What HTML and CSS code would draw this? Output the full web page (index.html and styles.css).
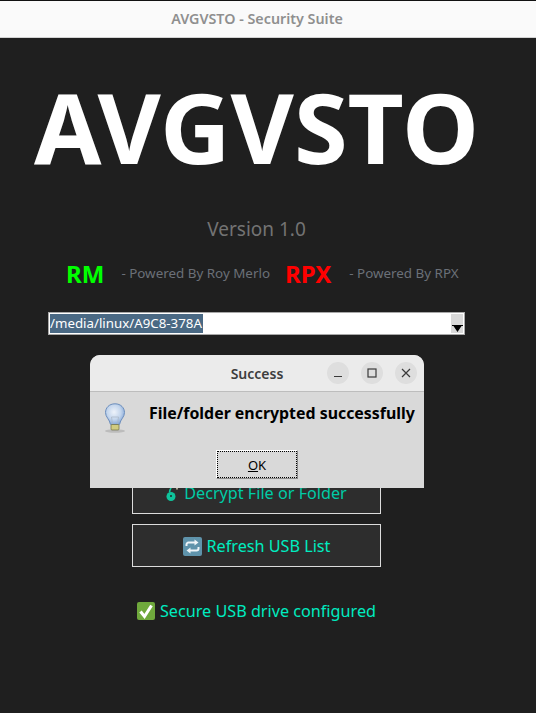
FILE: index.html
```html
<!DOCTYPE html>
<html lang="en">
  <head>
    <meta charset="UTF-8" />
    <meta name="viewport" content="width=device-width, initial-scale=1.0" />
    <title>AVGVSTO - Security Suite</title>
    <link rel="stylesheet" href="styles.css">
  </head>
  <body>
    <div class="window">
      <header class="titlebar">AVGVSTO - Security Suite</header>
      <main class="content">
        <h1 class="logo">AVGVSTO</h1>
        <p class="version">Version 1.0</p>
        <div class="credits">
          <span class="mark green">RM</span>
          <span class="powered">- Powered By Roy Merlo</span>
          <span class="mark red">RPX</span>
          <span class="powered">- Powered By RPX</span>
        </div>
        <div class="combo">
          <div class="combo-field"><span class="combo-value">/media/linux/A9C8-378A</span></div>
          <div class="combo-arrow">
            <svg width="11" height="7" viewBox="0 0 11 7"><path d="M0 0h11v1H9.500L5.500 7l-4-6H0z" fill="#000"/></svg>
          </div>
        </div>
        <div class="actions">
          <button class="action dim">
            <svg class="icon" width="13" height="18" viewBox="0 0 13 18">
              <circle cx="5" cy="12.500" r="4.500" fill="#0fc49c"/>
              <circle cx="5" cy="12" r="1" fill="#1f2a28"/>
              <path d="M3.500 8.500C4 5 5 2.500 7.500 2.500" fill="none" stroke="#0fc49c" stroke-width="1.600"/>
              <path d="M11 1.500v4" stroke="#d9d2b4" stroke-width="1.500"/>
            </svg>
            Decrypt File or Folder
          </button>
          <button class="action">
            <svg class="icon" width="19" height="19" viewBox="0 0 19 19">
              <rect width="19" height="19" rx="2" fill="#5f93ab"/>
              <path d="M3.500 9V7.500a2 2 0 0 1 2-2h7" fill="none" stroke="#eef4f8" stroke-width="2"/>
              <path d="M11.500 2.500l4 3-4 3z" fill="#eef4f8"/>
              <path d="M15.500 10v1.500a2 2 0 0 1-2 2h-7" fill="none" stroke="#eef4f8" stroke-width="2"/>
              <path d="M7.500 10.500l-4 3 4 3z" fill="#eef4f8"/>
            </svg>
            Refresh USB List
          </button>
        </div>
        <p class="status">
          <svg class="icon" width="18" height="18" viewBox="0 0 18 18">
            <rect width="18" height="18" rx="2" fill="#6fa83c"/>
            <path d="M3.500 9.500l4 5 7-11" fill="none" stroke="#fff" stroke-width="3"/>
          </svg>
          Secure USB drive configured
        </p>
      </main>

      <section class="dialog">
        <div class="dialog-bar">
          <span class="dialog-title">Success</span>
          <div class="dialog-controls">
            <span class="ctl"><svg width="12" height="12" viewBox="0 0 12 12"><path d="M2 9.500h8" stroke="#3a3a3a" stroke-width="1.200"/></svg></span>
            <span class="ctl"><svg width="12" height="12" viewBox="0 0 12 12"><rect x="2" y="2" width="8" height="8" fill="none" stroke="#3a3a3a" stroke-width="1.200"/></svg></span>
            <span class="ctl"><svg width="12" height="12" viewBox="0 0 12 12"><path d="M2 2l8 8M10 2l-8 8" stroke="#3a3a3a" stroke-width="1.200"/></svg></span>
          </div>
        </div>
        <div class="dialog-body">
          <svg class="bulb" width="22" height="30" viewBox="0 0 22 30">
            <defs>
              <radialGradient id="glass" cx="0.45" cy="0.4" r="0.6">
                <stop offset="0" stop-color="#eef3fa"/>
                <stop offset="0.6" stop-color="#c3d5ec"/>
                <stop offset="1" stop-color="#86a8d8"/>
              </radialGradient>
            </defs>
            <ellipse cx="11" cy="28" rx="10" ry="1.800" fill="#bcbcbc"/>
            <path d="M11 .8C5 .8 1.500 5 1.500 9.500c0 4.800 4 6.500 5 12h9c1-5.500 5-7.200 5-12C20.500 5 17 .8 11 .8z" fill="url(#glass)" stroke="#6d8ebc"/>
            <path d="M8.500 21l-1-7M13.500 21l1-7M7.500 14l7 0" fill="none" stroke="#a9b6c4" stroke-width="0.700"/>
            <rect x="7" y="21.500" width="8" height="5.500" rx="1" fill="#d0cb80" stroke="#6f6f45" stroke-width="0.700"/>
          </svg>
          <p class="dialog-msg">File/folder encrypted successfully</p>
        </div>
        <div class="dialog-foot">
          <button class="ok"><u>O</u>K</button>
        </div>
      </section>
    </div>
  </body>
</html>
```

FILE: styles.css
```css
html,
body {
  margin: 0;
  height: 100%;
}
body {
  background-color: #1f1f1f;
  font-family: "Noto Sans", sans-serif;
  overflow: hidden;
}
p,
h1 {
  margin: 0;
}
.window {
  position: relative;
  height: 713px;
  border-top: 1px solid #111;
  box-sizing: border-box;
}
.titlebar {
  height: 37px;
  box-sizing: border-box;
  padding-right: 22px;
  background: #fafafa;
  border-bottom: 1px solid #d2d2d2;
  color: #8f8f8f;
  font-size: 14.300px;
  font-weight: 600;
  line-height: 36px;
  text-align: center;
}
.content {
  display: flex;
  flex-direction: column;
  align-items: center;
  padding-right: 23px;
}
.logo {
  margin-top: 22px;
  color: #fff;
  font-size: 97.500px;
  font-weight: 700;
  line-height: 134px;
}
.version {
  margin-top: 23px;
  color: #737373;
  font-size: 19px;
  line-height: 25px;
}
.credits {
  align-self: flex-start;
  display: flex;
  align-items: center;
  margin: 16px 0 0 66px;
  height: 30px;
}
.mark {
  font-size: 24px;
  font-weight: 700;
}
.green {
  color: #00ff00;
  margin-right: 17px;
}
.red {
  color: #ff0000;
  margin: 0 18px 0 15px;
}
.powered {
  color: #6b7078;
  font-size: 13.400px;
}
.combo {
  align-self: flex-start;
  display: flex;
  box-sizing: border-box;
  width: 417px;
  height: 23px;
  margin: 24px 0 0 48px;
  padding: 1px;
  background: #fff;
  border: 1px solid #a8a8a8;
}
.combo-field {
  flex: 1;
  color: #fff;
  font-size: 13.300px;
  line-height: 19px;
}
.combo-value {
  display: inline-block;
  background: #4a6984;
  padding-right: 1px;
}
.combo-arrow {
  display: flex;
  align-items: flex-end;
  justify-content: center;
  width: 12px;
  padding-bottom: 1px;
  box-sizing: border-box;
  background: #d9d9d9;
}
.actions {
  display: flex;
  flex-direction: column;
  gap: 10px;
  margin-top: 136px;
}
.action {
  display: flex;
  align-items: center;
  justify-content: center;
  gap: 5px;
  width: 249px;
  height: 43px;
  padding-top: 2px;
  background: #2d2d2d;
  border: 1px solid #dcdcdc;
  color: #00ecc0;
  font-family: inherit;
  font-size: 16.200px;
}
.dim {
  color: #00cba6;
}
.status {
  display: flex;
  align-items: center;
  gap: 5px;
  margin-top: 33px;
  color: #00ecc0;
  font-size: 16.200px;
  line-height: 22px;
}
.dialog {
  position: absolute;
  left: 90px;
  top: 354px;
  width: 334px;
  height: 133px;
  background: #d9d9d9;
  border-radius: 10px 10px 0 0;
  overflow: hidden;
}
.dialog-bar {
  position: relative;
  display: flex;
  align-items: center;
  justify-content: center;
  height: 36px;
  background: #ebebeb;
  border-bottom: 1px solid #bdbdbd;
}
.dialog-title {
  color: #3d3d3d;
  font-size: 14px;
  font-weight: 600;
}
.dialog-controls {
  position: absolute;
  right: 7px;
  top: 7px;
  display: flex;
  gap: 12px;
}
.ctl {
  display: flex;
  align-items: center;
  justify-content: center;
  width: 22px;
  height: 22px;
  border-radius: 50%;
  background: #dedede;
}
.dialog-body {
  display: flex;
  align-items: flex-start;
  padding: 11px 0 0 14px;
  height: 47px;
}
.dialog-msg {
  margin: 0 0 0 23px;
  color: #000;
  font-size: 15.900px;
  font-weight: 700;
  line-height: 20px;
  white-space: nowrap;
}
.dialog-foot {
  display: flex;
  justify-content: center;
}
.ok {
  width: 82px;
  height: 29px;
  background: #d9d9d9;
  border: 1px solid #fff;
  border-right-color: #8a8a8a;
  border-bottom-color: #8a8a8a;
  outline: 1px dotted #000;
  outline-offset: -2px;
  color: #000;
  font-family: inherit;
  font-size: 13px;
}
```
